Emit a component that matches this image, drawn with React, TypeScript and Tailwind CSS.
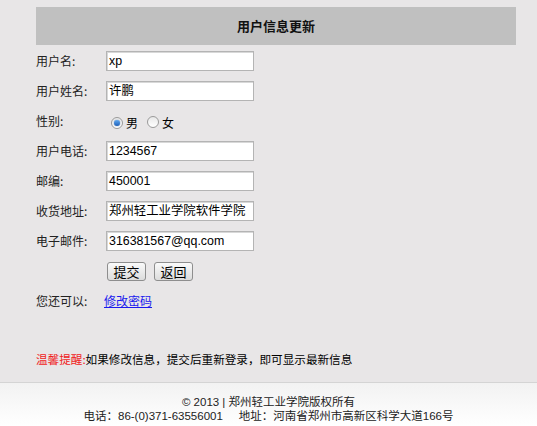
import React from "react";

const font = { fontFamily: '"Noto Sans CJK SC", "Liberation Sans", sans-serif' };

function Field({ value }: { value: string }) {
  return (
    <div
      className="w-[148px] h-[20px] bg-white border border-[#b4b4b4] shadow-[inset_1px_1px_0_#d8d8d8] flex items-center pl-[2px] text-[12.4px] text-black leading-none whitespace-nowrap overflow-hidden"
      style={{ fontFamily: '"Liberation Sans", "Noto Sans CJK SC", sans-serif' }}
    >
      {value}
    </div>
  );
}

function Radio({ checked }: { checked?: boolean }) {
  return (
    <span className="inline-flex w-[12px] h-[12px] rounded-full border border-[#9a9a9a] bg-gradient-to-b from-[#e8e8e8] to-[#ffffff] items-center justify-center">
      {checked && (
        <span className="block w-[6px] h-[6px] rounded-full bg-gradient-to-b from-[#5fa8f0] to-[#1d5fb8] shadow-[0_0_1px_#0a3b80]" />
      )}
    </span>
  );
}

function Btn({ children }: { children: React.ReactNode }) {
  return (
    <span className="inline-flex items-center justify-center h-[19px] w-[39px] rounded-[3px] border border-[#8e8e8e] bg-gradient-to-b from-[#fafafa] to-[#dcdcdc] text-[13px] text-black leading-none">
      {children}
    </span>
  );
}

function Row({ label, children }: { label: string; children: React.ReactNode }) {
  return (
    <div className="flex items-center h-[30px]">
      <div className="w-[70px] text-[12px] text-[#222]">{label}</div>
      <div className="flex items-center">{children}</div>
    </div>
  );
}

export default function App() {
  return (
    <div className="w-[537px] h-[426px] bg-[#e8e6e7] flex flex-col overflow-hidden" style={font}>
      <div className="pt-[7px] pl-[36px] flex-1">
        <div className="w-[480px] h-[38px] bg-[#c0c0c0] flex items-center justify-center text-[13px] font-bold text-[#111]">
          用户信息更新
        </div>
        <div className="mt-[1px]">
          <Row label="用户名:"><Field value="xp" /></Row>
          <Row label="用户姓名:"><Field value="许鹏" /></Row>
          <Row label="性别:">
            <div className="flex items-center pl-[5px] pt-[3px] text-[12px] text-black">
              <Radio checked />
              <span className="ml-[3px]">男</span>
              <span className="ml-[9px]"><Radio /></span>
              <span className="ml-[3px]">女</span>
            </div>
          </Row>
          <Row label="用户电话:"><Field value="1234567" /></Row>
          <Row label="邮编:"><Field value="450001" /></Row>
          <Row label="收货地址:"><Field value="郑州轻工业学院软件学院" /></Row>
          <Row label="电子邮件:"><Field value="316381567@qq.com" /></Row>
          <div className="flex items-center h-[30px] pl-[71px] gap-[8px]">
            <Btn>提交</Btn>
            <Btn>返回</Btn>
          </div>
          <div className="flex items-center h-[30px]">
            <div className="w-[68px] text-[12px] text-[#222]">您还可以:</div>
            <a className="text-[12px] text-[#1a1aee] underline">修改密码</a>
          </div>
        </div>
        <div className="mt-[35px] text-[11.6px] text-black">
          <span className="text-[#f01c1c]">温馨提醒:</span>如果修改信息，提交后重新登录，即可显示最新信息
        </div>
      </div>
      <div
        className="h-[44px] border-t border-[#d4d4d4] bg-gradient-to-b from-[#f2f2f2] to-[#ffffff] flex flex-col items-center pt-[12px] text-[11.5px] leading-[14px] text-[#222]"
        style={{ fontFamily: '"Liberation Sans", "Noto Sans CJK SC", sans-serif' }}
      >
        <div>© 2013 | 郑州轻工业学院版权所有</div>
        <div className="whitespace-pre">电话：86-(0)371-63556001     地址：河南省郑州市高新区科学大道166号</div>
      </div>
    </div>
  );
}
